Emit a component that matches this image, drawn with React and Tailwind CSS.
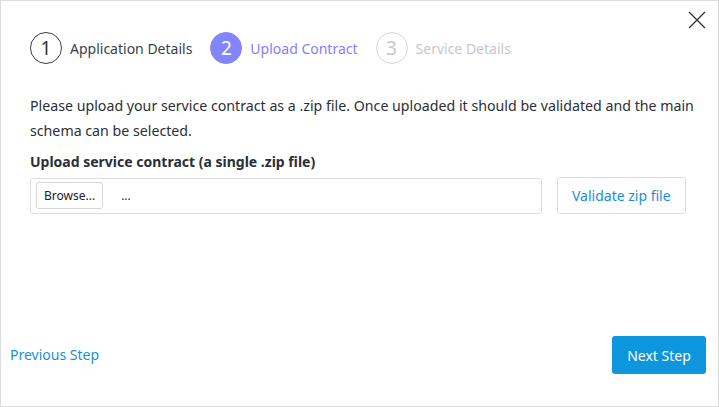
const steps = [
  { n: 1, label: 'Application Details', state: 'done' },
  { n: 2, label: 'Upload Contract', state: 'active' },
  { n: 3, label: 'Service Details', state: 'todo' },
];

const StepItem = ({ n, label, state }) => {
  const circle =
    state === 'active'
      ? 'bg-[#8385ff] border-[#8385ff] text-white'
      : state === 'done'
        ? 'border-[#3a3f4a] text-[#2f343d]'
        : 'border-[#d4d6da] text-[#c6c8cc]';
  const text =
    state === 'active' ? 'text-[#7f82ff]' : state === 'done' ? 'text-[#3a3f4a]' : 'text-[#c6c8cc]';

  return (
    <div className="flex items-center gap-2">
      <span
        className={`w-8 h-8 rounded-full border flex items-center justify-center text-[19px] leading-none ${circle}`}
      >
        {n}
      </span>
      <span className={`text-[14px] ${text}`}>{label}</span>
    </div>
  );
};

export default function App() {
  return (
    <div
      className="relative w-[719px] h-[407px] bg-white border border-[#dcdcdc] flex flex-col text-[#2b2f36]"
      style={{ fontFamily: '"Noto Sans", "Open Sans", sans-serif' }}
    >
      <button className="absolute top-[10px] right-[12px] text-[#333]">
        <svg width="18" height="18" viewBox="0 0 18 18" stroke="currentColor" strokeWidth="1.3" fill="none">
          <path d="M1 1L17 17M17 1L1 17" />
        </svg>
      </button>

      <div className="px-[29px] pt-[31px] flex items-center gap-[18px]">
        {steps.map((s) => (
          <StepItem key={s.n} {...s} />
        ))}
      </div>

      <div className="pl-[29px] pr-[12px] mt-[29px]">
        <p className="text-[14.2px] leading-[25px]">
          Please upload your service contract as a .zip file. Once uploaded it should be validated and the main
          schema can be selected.
        </p>
        <label className="block mt-[6px] text-[14px] leading-[25px] font-bold">
          Upload service contract (a single .zip file)
        </label>

        <div className="mt-[3px] flex items-center gap-[15px]">
          <div className="w-[512px] h-[36px] border border-[#dedede] rounded-[3px] flex items-center px-[5px] gap-[18px]">
            <button className="h-[27px] px-[7px] border border-[#d6d6d6] rounded-[3px] text-[12px] text-[#222]">
              Browse...
            </button>
            <span className="text-[12px] text-[#333]">...</span>
          </div>
          <button className="h-[37px] px-[14px] border border-[#dedede] rounded-[3px] text-[14px] text-[#1b8fd6]">
            Validate zip file
          </button>
        </div>
      </div>

      <div className="mt-auto mb-[32px] pl-[9px] pr-[12px] flex items-center justify-between">
        <button className="text-[14px] text-[#1b8fd6] -translate-y-px">Previous Step</button>
        <button className="w-[94px] h-[38px] rounded-[3px] bg-[#0d96db] text-white text-[14px]">Next Step</button>
      </div>
    </div>
  );
}
